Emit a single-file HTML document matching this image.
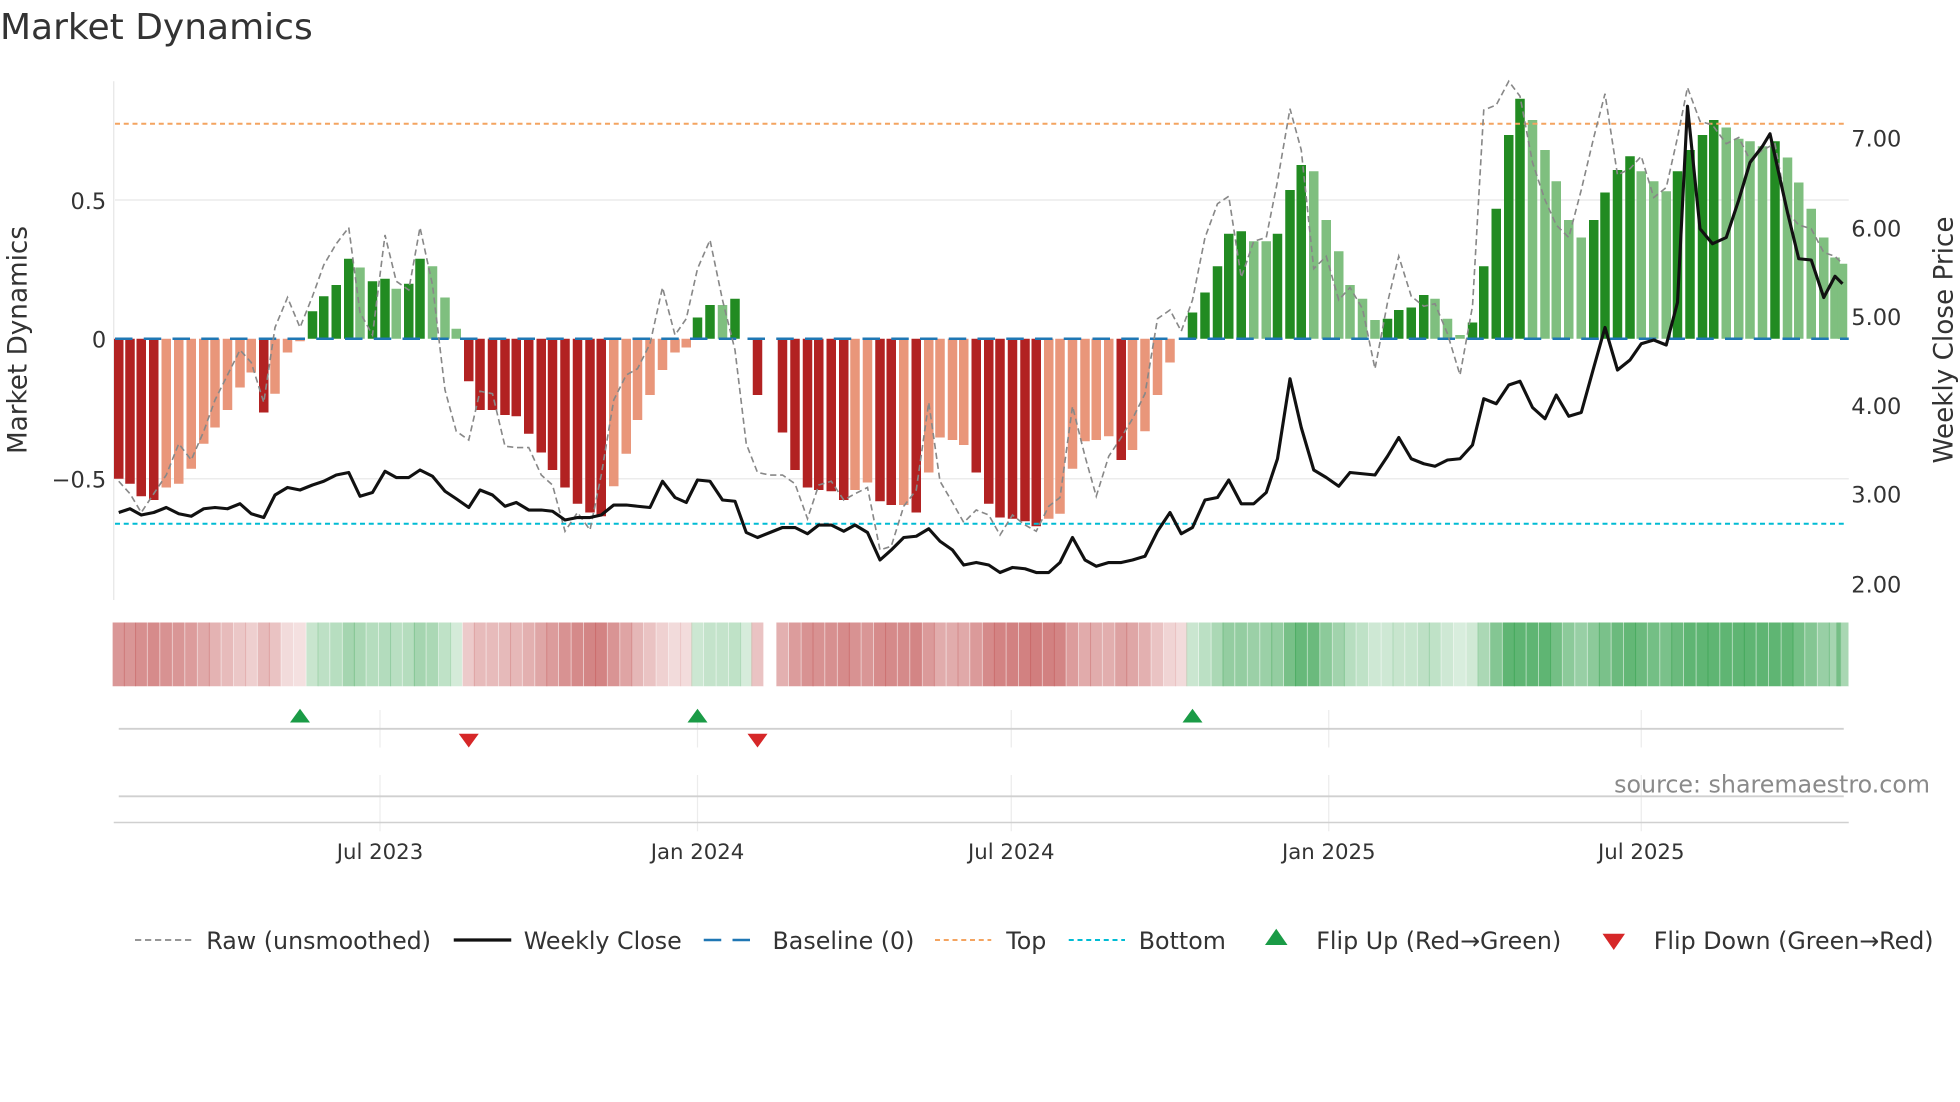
<!DOCTYPE html>
<html><head><meta charset="utf-8"><style>
html,body{margin:0;padding:0;background:#fff;width:1960px;height:1102px;overflow:hidden}
svg{display:block}
text{font-family:"DejaVu Sans","Liberation Sans",sans-serif;fill:#333}
</style></head><body>
<svg id="s" width="1960" height="1102" viewBox="0 0 1568 881.6" xmlns="http://www.w3.org/2000/svg">
<text x="0" y="31" font-size="28.8">Market Dynamics</text>
<line x1="91" y1="65" x2="91" y2="480" stroke="#e6e6e6" stroke-width="1"/>
<line x1="92" y1="160" x2="1479" y2="160" stroke="#ececec" stroke-width="1.2"/>
<line x1="92" y1="383" x2="1479" y2="383" stroke="#ececec" stroke-width="1.2"/>
<g id="bars"></g>
<g id="heat"></g>
<line x1="92" y1="271" x2="1479" y2="271" stroke="#1f77b4" stroke-width="2" stroke-dasharray="14,9"/>
<line x1="92" y1="99" x2="1475" y2="99" stroke="#f4a460" stroke-width="1.6" stroke-dasharray="4,3"/>
<line x1="92" y1="419" x2="1475" y2="419" stroke="#00bcd4" stroke-width="1.6" stroke-dasharray="4,3"/>
<polyline id="raw" fill="none" stroke="#888" stroke-width="1.3" stroke-dasharray="5,3"/>
<polyline id="close" fill="none" stroke="#111" stroke-width="2.5" stroke-linejoin="round"/>
<text x="85" y="167" font-size="18" text-anchor="end">0.5</text>
<text x="85" y="278" font-size="18" text-anchor="end">0</text>
<text x="85" y="390" font-size="18" text-anchor="end">−0.5</text>
<text x="1481" y="117" font-size="18">7.00</text>
<text x="1481" y="189" font-size="18">6.00</text>
<text x="1481" y="260" font-size="18">5.00</text>
<text x="1481" y="331" font-size="18">4.00</text>
<text x="1481" y="402" font-size="18">3.00</text>
<text x="1481" y="474" font-size="18">2.00</text>
<text transform="translate(21,272) rotate(-90)" font-size="21" text-anchor="middle">Market Dynamics</text>
<text transform="translate(1562,272) rotate(-90)" font-size="21" text-anchor="middle">Weekly Close Price</text>
<g stroke="#ececec" stroke-width="1">
<line x1="304" y1="568" x2="304" y2="598"/><line x1="558" y1="568" x2="558" y2="598"/><line x1="809" y1="568" x2="809" y2="598"/><line x1="1063" y1="568" x2="1063" y2="598"/><line x1="1313" y1="568" x2="1313" y2="598"/>
<line x1="304" y1="620" x2="304" y2="665"/><line x1="558" y1="620" x2="558" y2="665"/><line x1="809" y1="620" x2="809" y2="665"/><line x1="1063" y1="620" x2="1063" y2="665"/><line x1="1313" y1="620" x2="1313" y2="665"/>
</g>
<line x1="95" y1="583" x2="1475" y2="583" stroke="#d0d0d0" stroke-width="1.5"/>
<line x1="95" y1="637" x2="1475" y2="637" stroke="#d0d0d0" stroke-width="1.5"/>
<line x1="91" y1="658" x2="1479" y2="658" stroke="#d0d0d0" stroke-width="1.2"/>
<g fill="#1a9b46"><path d="M240 567l-8 11h16z"/><path d="M558 567l-8 11h16z"/><path d="M954 567l-8 11h16z"/></g>
<g fill="#d62728"><path d="M375 598l-8-11h16z"/><path d="M606 598l-8-11h16z"/></g>
<text x="1544" y="634" font-size="19" text-anchor="end" style="fill:#8a8a8a">source: sharemaestro.com</text>
<g font-size="17" text-anchor="middle"><text x="304" y="687">Jul 2023</text><text x="558" y="687">Jan 2024</text><text x="809" y="687">Jul 2024</text><text x="1063" y="687">Jan 2025</text><text x="1313" y="687">Jul 2025</text></g>
<g font-size="19">
<line x1="108" y1="752" x2="153" y2="752" stroke="#888" stroke-width="1.4" stroke-dasharray="5,3"/><text x="165" y="759">Raw (unsmoothed)</text>
<line x1="363" y1="752" x2="409" y2="752" stroke="#111" stroke-width="2.6"/><text x="419" y="759">Weekly Close</text>
<line x1="563" y1="752" x2="607" y2="752" stroke="#1f77b4" stroke-width="2" stroke-dasharray="14,9"/><text x="618" y="759">Baseline (0)</text>
<line x1="748" y1="752" x2="793" y2="752" stroke="#f4a460" stroke-width="1.6" stroke-dasharray="4,3"/><text x="805" y="759">Top</text>
<line x1="855" y1="752" x2="900" y2="752" stroke="#00bcd4" stroke-width="1.6" stroke-dasharray="4,3"/><text x="911" y="759">Bottom</text>
<path d="M1021 743l-9 13h18z" fill="#1a9b46"/><text x="1053" y="759">Flip Up (Red→Green)</text>
<path d="M1291 760l-9-13h18z" fill="#d62728"/><text x="1323" y="759">Flip Down (Green→Red)</text>
</g>
</svg>
<script>
var B=[[95,383,'D'],[104,387,'D'],[113,397,'D'],[123,400,'D'],[133,390,'S'],[143,387,'S'],[153,375,'S'],[163,355,'S'],[172,342,'S'],[182,328,'S'],[192,310,'S'],[201,298,'S'],[211,330,'D'],[220,315,'S'],[230,282,'S'],[240,273,'S'],
[250,249,'G'],[259,237,'G'],[269,228,'G'],[279,207,'G'],[288,214,'L'],[298,225,'G'],[308,223,'G'],[317,231,'L'],[327,227,'G'],[336,207,'G'],[346,213,'L'],[356,238,'L'],[365,263,'L'],
[375,305,'D'],[384,328,'D'],[394,328,'D'],[404,332,'D'],[413,333,'D'],[423,347,'D'],[433,362,'D'],[442,376,'D'],[452,390,'D'],[462,403,'D'],[472,410,'D'],[481,413,'D'],[491,389,'S'],[501,363,'S'],[510,336,'S'],[520,316,'S'],[530,296,'S'],[540,282,'S'],[549,278,'S'],
[558,254,'G'],[568,244,'G'],[578,244,'L'],[588,239,'G'],[597,266,'N'],[606,316,'D'],
[626,346,'D'],[636,376,'D'],[646,390,'D'],[655,392,'D'],[665,393,'D'],[675,400,'D'],[684,392,'S'],[694,386,'S'],[704,401,'D'],[713,404,'D'],[723,404,'S'],[733,410,'D'],[743,378,'S'],[752,350,'S'],[762,352,'S'],[771,356,'S'],[781,378,'D'],[791,403,'D'],[800,414,'D'],[810,415,'D'],[820,417,'D'],[829,421,'D'],[839,415,'S'],[848,411,'S'],[858,375,'S'],[868,353,'S'],[877,352,'S'],[887,349,'S'],[897,368,'D'],[906,360,'S'],[916,345,'S'],[926,316,'S'],[936,290,'S'],[945,280,'M'],
[954,250,'G'],[964,234,'G'],[974,213,'G'],[983,187,'G'],[993,185,'G'],[1003,193,'L'],[1013,193,'L'],[1022,187,'G'],[1032,152,'G'],[1041,132,'G'],[1051,137,'L'],[1061,176,'L'],[1071,201,'L'],[1080,228,'L'],[1090,239,'L'],[1100,256,'L'],[1110,255,'G'],[1119,248,'G'],[1129,246,'G'],[1139,236,'G'],[1148,239,'L'],[1158,255,'L'],[1168,268,'L'],[1178,258,'G'],[1187,213,'G'],[1197,167,'G'],[1207,108,'G'],[1216,79,'G'],[1226,96,'L'],[1236,120,'L'],[1245,145,'L'],[1255,176,'L'],[1265,190,'L'],[1275,176,'G'],[1284,154,'G'],[1294,136,'G'],[1304,125,'G'],[1313,137,'L'],[1323,145,'L'],[1333,153,'L'],[1342,137,'G'],[1352,120,'G'],[1362,108,'G'],[1371,96,'G'],[1381,102,'L'],[1391,111,'L'],[1400,113,'L'],[1410,117,'L'],[1420,113,'G'],[1430,126,'L'],[1439,146,'L'],[1449,167,'L'],[1459,190,'L'],[1468,206,'L'],[1474,211,'L']];
var C={D:'#b22222',S:'#e9967a',G:'#228b22',L:'#7fbf7f'};
var s='',h='';
B.forEach(function(b){var y0=271,y=b[1];
if(C[b[2]]){s+='<rect x="'+(b[0]-3.8)+'" y="'+Math.min(y,y0)+'" width="7.6" height="'+Math.abs(y-y0)+'" fill="'+C[b[2]]+'"/>';}
var v=Math.min(1,Math.abs(y-271)/150);var red=(b[2]=='D'||b[2]=='S'||b[2]=='M');
var col=red?'rgb(196,90,90)':'rgb(50,160,75)';
var hw=(b[0]==1474)?10:9.8;
h+='<rect x="'+(b[0]-4.9)+'" y="498" width="'+hw+'" height="51" fill="'+col+'" fill-opacity="'+(0.18+0.6*v).toFixed(2)+'"/>';
h+='<line x1="'+(b[0]+4.9)+'" y1="498" x2="'+(b[0]+4.9)+'" y2="549" stroke="#fff" stroke-opacity="0.5" stroke-width="0.8"/>';});
document.getElementById('bars').innerHTML=s;document.getElementById('heat').innerHTML=h;
var cl="95,410 104,407 113,412 123,410 133,406 143,411 153,413 163,407 172,406 182,407 192,403 201,411 211,414 220,396 230,390 240,392 250,388 259,385 269,380 279,378 288,397 298,394 308,377 317,382 327,382 336,376 346,381 356,393 365,399 375,406 384,392 394,396 404,405 413,402 423,408 433,408 442,409 452,416 462,414 472,414 481,412 491,404 501,404 510,405 520,406 530,385 540,398 549,402 558,384 568,385 578,400 588,401 597,426 606,430 616,426 626,422 636,422 646,427 655,420 665,420 675,425 684,420 694,426 704,448 713,440 723,430 733,429 743,423 752,433 762,440 771,452 781,450 791,452 800,458 810,454 820,455 829,458 839,458 848,450 858,430 868,448 877,453 887,450 897,450 906,448 916,445 926,425 936,410 945,427 954,422 964,400 974,398 983,384 993,403 1003,403 1013,394 1022,367 1032,303 1041,342 1051,376 1061,382 1071,389 1080,378 1090,379 1100,380 1110,365 1119,350 1129,367 1139,371 1148,373 1158,368 1168,367 1178,356 1187,319 1197,323 1207,308 1216,305 1226,326 1236,335 1245,316 1255,333 1265,330 1275,294 1284,262 1294,296 1304,288 1313,275 1323,272 1333,276 1342,242 1350,85 1360,183 1370,195 1381,190 1391,160 1400,130 1410,117 1416,107 1430,170 1439,207 1449,208 1459,238 1468,221 1474,227";
var rw="95,385 104,395 113,410 123,395 133,380 143,355 153,368 163,345 172,320 182,300 192,280 201,290 211,322 220,262 230,238 240,262 250,237 259,212 269,195 279,182 288,250 298,268 308,188 317,225 327,232 336,182 346,228 356,312 365,345 375,352 384,313 394,315 404,357 413,358 423,358 433,380 442,388 452,425 462,410 472,424 481,380 491,320 501,300 510,295 520,275 530,230 540,268 549,255 558,215 568,192 578,240 588,280 597,355 606,378 616,380 626,380 636,387 646,415 655,388 665,385 675,400 684,395 694,390 704,440 713,437 723,405 733,392 743,322 752,385 762,402 771,418 781,408 791,412 800,428 810,412 820,420 829,425 839,405 848,398 858,325 868,365 877,397 887,365 897,350 906,335 916,315 926,255 936,248 945,265 954,240 964,190 974,163 983,157 993,222 1003,193 1013,190 1022,145 1032,87 1041,120 1051,215 1061,205 1071,240 1080,230 1090,247 1100,295 1110,242 1119,205 1129,237 1139,245 1148,243 1158,267 1168,300 1178,245 1187,88 1197,84 1207,65 1216,77 1226,130 1236,160 1245,180 1255,190 1265,152 1275,110 1284,75 1294,140 1304,135 1313,125 1323,158 1333,150 1342,110 1350,70 1360,97 1370,100 1381,115 1391,110 1400,128 1410,120 1420,115 1430,170 1439,180 1449,183 1459,202 1468,205 1474,211";
document.getElementById('close').setAttribute('points',cl);document.getElementById('raw').setAttribute('points',rw);
</script>
</body></html>
